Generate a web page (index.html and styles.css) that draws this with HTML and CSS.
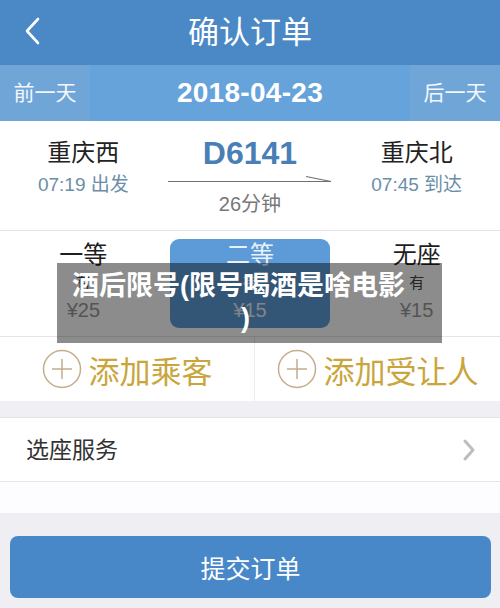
FILE: index.html
```html
<!DOCTYPE html>
<html lang="zh-CN">
<head>
  <meta charset="utf-8" />
  <meta name="viewport" content="width=device-width, initial-scale=1" />
  <title>确认订单</title>
  <link rel="stylesheet" href="styles.css">
</head>

<body>
  <div class="page">
    <div class="topbar">
      <svg class="back" width="16" height="28" viewBox="0 0 16 28">
        <polyline points="14,2 3,14 14,26" fill="none" stroke="#fff" stroke-width="2.6" stroke-linecap="round" stroke-linejoin="round" />
      </svg>
      <div class="title">确认订单</div>
    </div>

    <div class="datebar">
      <div class="day-btn">前一天</div>
      <div class="date">2018-04-23</div>
      <div class="day-btn">后一天</div>
    </div>

    <div class="train">
      <div class="station">
        <div class="name">重庆西</div>
        <div class="time">07:19 出发</div>
      </div>
      <div class="middle">
        <div class="code">D6141</div>
        <svg class="arrow" width="164" height="20" viewBox="0 0 164 20">
          <line x1="0" y1="10.5" x2="163" y2="10.5" stroke="#6f6f6f" stroke-width="1.2" />
          <line x1="138" y1="5.5" x2="163" y2="10.5" stroke="#6f6f6f" stroke-width="1.2" />
        </svg>
        <div class="duration">26分钟</div>
      </div>
      <div class="station">
        <div class="name">重庆北</div>
        <div class="time">07:45 到达</div>
      </div>
    </div>

    <div class="seats">
      <div class="seat">
        <div class="seat-name">一等</div>
        <div class="seat-left">有</div>
        <div class="seat-price">¥25</div>
      </div>
      <div class="seat selected">
        <div class="seat-name">二等</div>
        <div class="seat-left">有</div>
        <div class="seat-price">¥15</div>
      </div>
      <div class="seat">
        <div class="seat-name">无座</div>
        <div class="seat-left">有</div>
        <div class="seat-price">¥15</div>
      </div>

      <div class="caption">酒后限号(限号喝酒是啥电影<br><span class="paren">)</span></div>
    </div>

    <div class="adds">
      <div class="add">
        <svg class="plus" width="40" height="40" viewBox="0 0 40 40">
          <circle cx="20" cy="20" r="18.5" fill="none" stroke="#c4ad8a" stroke-width="1.5" />
          <line x1="10" y1="20" x2="30" y2="20" stroke="#c4ad8a" stroke-width="1.5" />
          <line x1="20" y1="10" x2="20" y2="30" stroke="#c4ad8a" stroke-width="1.5" />
        </svg>
        <span>添加乘客</span>
      </div>
      <div class="add">
        <svg class="plus" width="40" height="40" viewBox="0 0 40 40">
          <circle cx="20" cy="20" r="18.5" fill="none" stroke="#c4ad8a" stroke-width="1.5" />
          <line x1="10" y1="20" x2="30" y2="20" stroke="#c4ad8a" stroke-width="1.5" />
          <line x1="20" y1="10" x2="20" y2="30" stroke="#c4ad8a" stroke-width="1.5" />
        </svg>
        <span>添加受让人</span>
      </div>
    </div>

    <div class="gap"></div>

    <div class="row">
      <span>选座服务</span>
      <svg class="chev" width="14" height="24" viewBox="0 0 14 24">
        <polyline points="3,3 11,12 3,21" fill="none" stroke="#bdbdbd" stroke-width="3" stroke-linecap="round" stroke-linejoin="round" />
      </svg>
    </div>
    <div class="blank"></div>

    <div class="footer">
      <button class="submit">提交订单</button>
    </div>
  </div>
</body>
</html>
```

FILE: styles.css
```css
body {
  margin: 0;
  padding: 0;
  background-color: #efeef3;
  font-family: "Liberation Sans", "Noto Sans CJK SC", sans-serif;
}

.page {
  width: 500px;
  height: 608px;
  overflow: hidden;
}

.topbar {
  height: 65px;
  background-color: #4a89c6;
  display: flex;
  align-items: center;
  justify-content: center;
  position: relative;
}

.back {
  position: absolute;
  left: 24px;
  top: 17px;
}

.title {
  color: #fff;
  font-size: 31px;
  line-height: 65px;
}

.datebar {
  height: 56px;
  display: grid;
  grid-template-columns: 90px 1fr 90px;
  background-color: #66a3db;
  color: #fff;
}

.day-btn {
  background-color: #70a6d7;
  font-size: 21px;
  line-height: 56px;
  text-align: center;
  color: #f2f7fc;
}

.date {
  font-size: 28px;
  font-weight: bold;
  line-height: 56px;
  text-align: center;
  letter-spacing: 0.3px;
}

.train {
  background: #fff;
  display: grid;
  grid-template-columns: 1fr 1fr 1fr;
  padding: 14px 0 13px;
  height: 82px;
  border-bottom: 1px solid #e4e4e6;
}

.station {
  text-align: center;
}

.name {
  font-size: 24px;
  line-height: 36px;
  color: #222;
}

.time {
  font-size: 19px;
  line-height: 28px;
  color: #6b8ea8;
}

.middle {
  display: flex;
  flex-direction: column;
  align-items: center;
}

.code {
  font-size: 32px;
  font-weight: bold;
  line-height: 36px;
  color: #4a7fb6;
}

.arrow {
  display: block;
}

.duration {
  font-size: 20px;
  line-height: 26px;
  color: #777;
}

.seats {
  background: #fff;
  display: grid;
  grid-template-columns: 1fr 1fr 1fr;
  padding: 8px 0;
  border-bottom: 1px solid #e4e4e6;
  position: relative;
}

.seat {
  text-align: center;
  padding: 2px 0 5px;
  color: #1e1e1e;
}

.seat.selected {
  width: 160px;
  justify-self: center;
  background-color: #5d9bd8;
  border-radius: 9px;
  color: #e9f1fa;
}

.seat-name {
  font-size: 24px;
  line-height: 28px;
}

.seat-left {
  font-size: 15px;
  line-height: 28px;
  color: #444;
}

.seat-price {
  font-size: 20px;
  line-height: 26px;
  color: #9a9a9a;
}

.seat.selected .seat-left,
.seat.selected .seat-price {
  color: #e9f1fa;
}

.caption {
  position: absolute;
  left: 57px;
  top: 32px;
  width: 385px;
  height: 80px;
  box-sizing: border-box;
  padding: 7px 22px 9px 0;
  background: rgba(0, 0, 0, 0.45);
  color: #fff;
  font-size: 27px;
  font-weight: bold;
  line-height: 32px;
  text-align: center;
}

.paren {
  margin-left: 14px;
}

.adds {
  background: #fff;
  height: 64px;
  display: grid;
  grid-template-columns: 255px 1fr;
}

.add {
  display: flex;
  align-items: center;
  justify-content: center;
  gap: 7px;
  color: #c9a53c;
  font-size: 31px;
}

.add:first-child {
  border-right: 1px solid #ececee;
}

.gap {
  height: 16px;
  background-color: #f0eff4;
  border-bottom: 1px solid #e4e4e6;
}

.row {
  background: #fff;
  height: 63px;
  padding: 0 24px 0 26px;
  display: flex;
  align-items: center;
  justify-content: space-between;
  font-size: 23px;
  color: #333;
  border-bottom: 1px solid #e4e4e6;
}

.row span {
  margin-top: -4px;
}

.blank {
  height: 31px;
  background: #fdfcfe;
}

.footer {
  padding: 23px 9px 0 10px;
}

.submit {
  width: 100%;
  height: 62px;
  border: none;
  border-radius: 8px;
  background-color: #4888c8;
  color: #fff;
  font-family: "Liberation Sans", "Noto Sans CJK SC", sans-serif;
  font-size: 25px;
}
```
